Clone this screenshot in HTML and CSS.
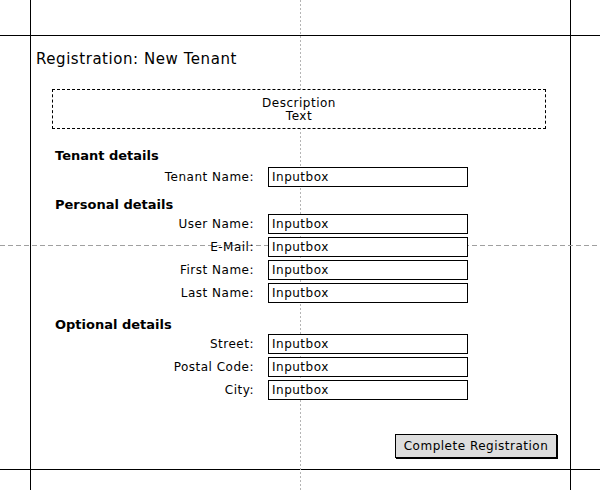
FILE: index.html
```html
<!DOCTYPE html>
<html lang="en">
<head>
<meta charset="utf-8">
<title>Registration: New Tenant</title>
<link rel="stylesheet" href="styles.css">
</head>
<body>
<div class="canvas">
  <div class="guide guide-v guide-left"></div>
  <div class="guide guide-v guide-right"></div>
  <div class="guide guide-h guide-top"></div>
  <div class="guide guide-h guide-bottom"></div>
  <div class="guide guide-dv"></div>
  <div class="guide guide-dh"></div>

  <main class="form">
    <h1 class="title">Registration: New Tenant</h1>
    <div class="desc">Description<br>Text</div>

    <section class="group">
      <h2 class="group-title">Tenant details</h2>
      <div class="rows">
        <label class="label">Tenant Name:</label><div class="input">Inputbox</div>
      </div>
    </section>

    <section class="group">
      <h2 class="group-title">Personal details</h2>
      <div class="rows">
        <label class="label">User Name:</label><div class="input">Inputbox</div>
        <label class="label">E-Mail:</label><div class="input">Inputbox</div>
        <label class="label">First Name:</label><div class="input">Inputbox</div>
        <label class="label">Last Name:</label><div class="input">Inputbox</div>
      </div>
    </section>

    <section class="group group-optional">
      <h2 class="group-title">Optional details</h2>
      <div class="rows">
        <label class="label">Street:</label><div class="input">Inputbox</div>
        <label class="label">Postal Code:</label><div class="input">Inputbox</div>
        <label class="label">City:</label><div class="input">Inputbox</div>
      </div>
    </section>

    <div class="actions">
      <button class="button" type="button">Complete Registration</button>
    </div>
  </main>
</div>
</body>
</html>
```

FILE: styles.css
```css
* { box-sizing: border-box; }

html, body {
  margin: 0;
  padding: 0;
  background: #fff;
}

body {
  font-family: "DejaVu Sans", Verdana, sans-serif;
  font-size: 12px;
  color: #000;
  -webkit-font-smoothing: none;
}

.canvas {
  position: relative;
  width: 600px;
  height: 490px;
  overflow: hidden;
  background: #fff;
}

/* mockup guide lines (drawn beneath the content) */
.guide { position: absolute; z-index: 0; }
.guide-v { top: 0; bottom: 0; width: 1px; background: #000; }
.guide-h { left: 0; right: 0; height: 1px; background: #000; }
.guide-left { left: 30px; }
.guide-right { left: 570px; }
.guide-top { top: 35px; }
.guide-bottom { top: 469px; }
.guide-dv {
  left: 300px; top: 0; bottom: 0; width: 1px;
  background: repeating-linear-gradient(to bottom, #b4b4b4 0 2px, transparent 2px 4px);
}
.guide-dh {
  top: 245px; left: 0; right: 0; height: 1px;
  background: repeating-linear-gradient(to right, #a0a0a0 0 5px, transparent 5px 8px);
}

.form {
  position: relative;
  z-index: 1;
  padding: 50px 0 0 36px;
  width: 557px;
}

.title {
  margin: 0;
  font-size: 15px;
  line-height: 18px;
  font-weight: normal;
  letter-spacing: 0.55px;
}

.desc {
  margin: 21px 0 0 16px;
  width: 494px;
  padding: 7px 0 5px;
  border: 1px dashed #000;
  background: #fff;
  text-align: center;
  line-height: 13px;
  letter-spacing: 0.5px;
}

.group {
  margin: 19px 0 0 19px;
}
.group + .group { margin-top: 10px; }
.group + .group-optional { margin-top: 14px; }

.group-title {
  margin: 0 0 1px 0;
  font-size: 13px;
  line-height: 16px;
  font-weight: bold;
}
.group:first-of-type .group-title { margin-bottom: 3px; }

.rows {
  display: grid;
  grid-template-columns: 199px 200px;
  column-gap: 14px;
  row-gap: 3px;
  align-items: center;
}

.label {
  text-align: right;
  letter-spacing: 0.5px;
  line-height: 18px;
}

.input {
  height: 20px;
  border: 1px solid #000;
  background: #fff;
  padding: 0 3px;
  line-height: 18px;
  letter-spacing: 0.5px;
}

.actions {
  display: flex;
  justify-content: flex-end;
  margin-top: 34px;
}

.button {
  height: 24px;
  width: 162px;
  margin: 0;
  padding: 0;
  font-family: inherit;
  font-size: 12px;
  letter-spacing: 0.5px;
  color: #000;
  background: #dedede;
  border: 1px solid #000;
  border-radius: 0;
  box-shadow: 1px 1px 0 #000;
}
```
